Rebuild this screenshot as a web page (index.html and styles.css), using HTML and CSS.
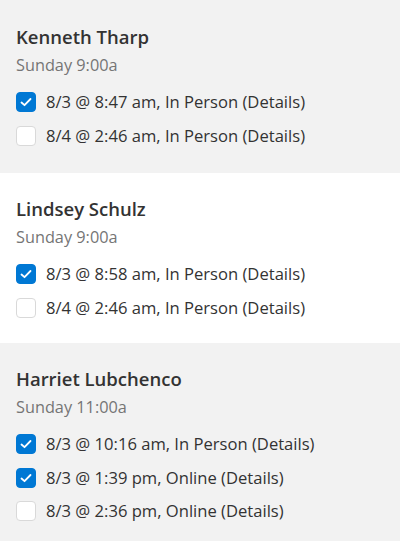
FILE: index.html
```html
<!DOCTYPE html>
<html>
<head>
<meta charset="utf-8">
<link rel="stylesheet" href="styles.css">
</head>
<body>
<div class="list">
  <section class="card gray first">
    <h2 class="name">Kenneth Tharp</h2>
    <div class="sub">Sunday 9:00a</div>
    <ul class="rows">
      <li class="row"><span class="box checked"><svg viewBox="0 0 20 20" width="20" height="20"><polyline points="5.5,10.5 8.5,13.2 14.5,7" /></svg></span><span class="label">8/3 @ 8:47 am, In Person (Details)</span></li>
      <li class="row"><span class="box"></span><span class="label">8/4 @ 2:46 am, In Person (Details)</span></li>
    </ul>
  </section>
  <section class="card white">
    <h2 class="name">Lindsey Schulz</h2>
    <div class="sub">Sunday 9:00a</div>
    <ul class="rows">
      <li class="row"><span class="box checked"><svg viewBox="0 0 20 20" width="20" height="20"><polyline points="5.5,10.5 8.5,13.2 14.5,7" /></svg></span><span class="label">8/3 @ 8:58 am, In Person (Details)</span></li>
      <li class="row"><span class="box"></span><span class="label">8/4 @ 2:46 am, In Person (Details)</span></li>
    </ul>
  </section>
  <section class="card gray last">
    <h2 class="name">Harriet Lubchenco</h2>
    <div class="sub">Sunday 11:00a</div>
    <ul class="rows">
      <li class="row"><span class="box checked"><svg viewBox="0 0 20 20" width="20" height="20"><polyline points="5.5,10.5 8.5,13.2 14.5,7" /></svg></span><span class="label">8/3 @ 10:16 am, In Person (Details)</span></li>
      <li class="row"><span class="box checked"><svg viewBox="0 0 20 20" width="20" height="20"><polyline points="5.5,10.5 8.5,13.2 14.5,7" /></svg></span><span class="label">8/3 @ 1:39 pm, Online (Details)</span></li>
      <li class="row"><span class="box"></span><span class="label">8/3 @ 2:36 pm, Online (Details)</span></li>
    </ul>
  </section>
</div>
</body>
</html>
```
FILE: styles.css
```css
html, body {
  margin: 0;
  padding: 0;
  background: #ffffff;
}
body {
  font-family: "Open Sans", "Noto Sans", sans-serif;
  color: #333333;
}
.card {
  padding: 22px 16px 0 16px;
  height: 170px;
  box-sizing: border-box;
}
.card.first {
  padding-top: 23px;
  height: 173px;
}
.card.last {
  height: auto;
  padding-bottom: 20px;
}
.gray {
  background: #f2f2f2;
}
.white {
  background: #ffffff;
}
.name {
  margin: 0;
  font-size: 18.5px;
  line-height: 28px;
  font-weight: 600;
  color: #333333;
}
.sub {
  margin-top: 3px;
  font-size: 16.3px;
  line-height: 22px;
  color: #757575;
}
.rows {
  list-style: none;
  margin: 16px 0 0 0;
  padding: 0;
  display: flex;
  flex-direction: column;
  gap: 13.5px;
}
.row {
  display: flex;
  align-items: center;
  gap: 10px;
  height: 20px;
}
.box {
  width: 20px;
  height: 20px;
  box-sizing: border-box;
  border: 1px solid #d9d9d9;
  border-radius: 4px;
  background: #ffffff;
  flex: none;
  display: flex;
}
.box.checked {
  background: #0078d4;
  border-color: #0078d4;
}
.box svg {
  margin: -1px;
  fill: none;
  stroke: #ffffff;
  stroke-width: 1.8;
  stroke-linecap: round;
  stroke-linejoin: round;
}
.label {
  font-size: 16.6px;
  line-height: 20px;
  color: #333333;
}
```
